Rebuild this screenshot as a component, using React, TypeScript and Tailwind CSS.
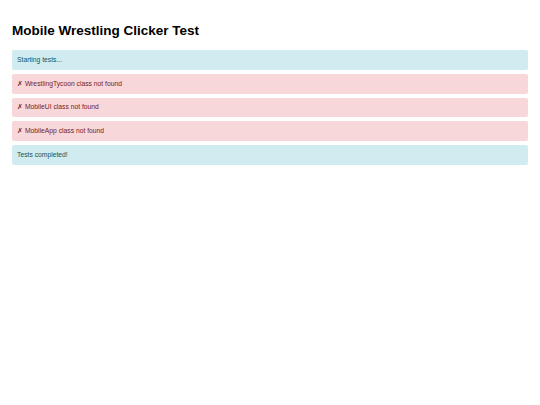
import React from 'react';

type Result = { kind: 'info' | 'error'; text: string };

const results: Result[] = [
  { kind: 'info', text: 'Starting tests...' },
  { kind: 'error', text: '✗ WrestlingTycoon class not found' },
  { kind: 'error', text: '✗ MobileUI class not found' },
  { kind: 'error', text: '✗ MobileApp class not found' },
  { kind: 'info', text: 'Tests completed!' },
];

const App: React.FC = () => {
  return (
    <div className="min-h-[405px] bg-white px-[12px] pt-[22px] font-['Liberation_Sans',Arial,sans-serif]">
      <h1 className="text-[13.5px] font-bold leading-[18px] text-black mb-[10px]">Mobile Wrestling Clicker Test</h1>
      <div className="flex flex-col gap-[4px]">
        {results.map((r, i) => (
          <div
            key={i}
            className={`h-[19.75px] flex items-center px-[5px] rounded-[2px] text-[6.75px] ${
              r.kind === 'info' ? 'bg-[#d1ecf1] text-[#0c5460]' : 'bg-[#f8d7da] text-[#721c24]'
            }`}
          >
            {r.text}
          </div>
        ))}
      </div>
    </div>
  );
};

export default App;
